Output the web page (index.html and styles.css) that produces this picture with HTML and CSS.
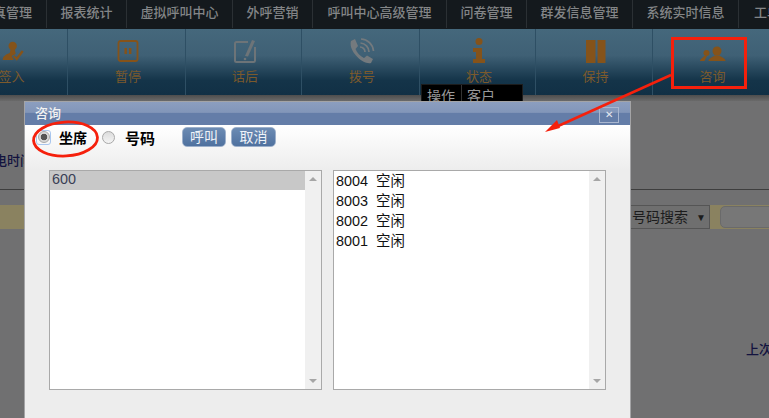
FILE: index.html
```html
<!DOCTYPE html>
<html lang="zh">
<head>
<meta charset="utf-8">
<title>咨询</title>
<link rel="stylesheet" href="styles.css">
</head>
<body>
<div class="page">
  <nav class="nav">
    <span class="nav-item w-first"><span class="clip-right">真管理</span></span>
    <span class="nav-item w80">报表统计</span>
    <span class="nav-item w106">虚拟呼叫中心</span>
    <span class="nav-item w80">外呼营销</span>
    <span class="nav-item w134">呼叫中心高级管理</span>
    <span class="nav-item w80">问卷管理</span>
    <span class="nav-item w106">群发信息管理</span>
    <span class="nav-item w106">系统实时信息</span>
    <span class="nav-item w-last">工单</span>
  </nav>
  <div class="toolbar">
    <div class="tool tool-a tool-first">
      <svg class="icon" viewBox="1.300 0 26 26" width="26" height="26"><circle cx="15" cy="8" r="4.200" fill="#85531a"/><path d="M13 11h4l1 5-4 2 2 4H5c0-4 4-6 7-7z" fill="#85531a"/><path d="M16 18l3 3 6-8" fill="none" stroke="#85531a" stroke-width="2.400"/></svg>
      <span class="tool-label">签入</span>
    </div>
    <div class="tool tool-a">
      <svg class="icon" viewBox="0 0 26 26" width="26" height="26"><rect x="3.500" y="3" width="19" height="20" rx="2" fill="none" stroke="#85531a" stroke-width="1.800"/><rect x="9.500" y="10" width="2.400" height="6" fill="#85531a"/><rect x="14" y="10" width="2.400" height="6" fill="#85531a"/></svg>
      <span class="tool-label">暂停</span>
    </div>
    <div class="tool tool-b">
      <svg class="icon" viewBox="0 0 26 26" width="26" height="26"><path d="M16 4H4.500a1.500 1.500 0 0 0-1.500 1.500v17a1.500 1.500 0 0 0 1.500 1.500h17a1.500 1.500 0 0 0 1.500-1.500V9" fill="none" stroke="#6d7478" stroke-width="2"/><path d="M13 18l7-16 3 1-7 15.500z" fill="#6d7478"/><circle cx="13" cy="21" r="1.300" fill="#6d7478"/></svg>
      <span class="tool-label">话后</span>
    </div>
    <div class="tool tool-a">
      <svg class="icon" viewBox="0 0 26 26" width="26" height="26"><path d="M2 3l4-2 3 7-2.500 3C8 15 11 18 15 20l3-2.500 6 3.500-2 4C14 27-1 13 2 3z" fill="#747a7e"/><path d="M11 9a5 5 0 0 1 5 5M11.500 5A9 9 0 0 1 20 14M12 1a13 13 0 0 1 12.500 12" fill="none" stroke="#747a7e" stroke-width="1.700"/></svg>
      <span class="tool-label">拨号</span>
    </div>
    <div class="tool tool-b">
      <svg class="icon" viewBox="0 0 26 26" width="26" height="26"><circle cx="13" cy="3.500" r="3.500" fill="#85531a"/><path d="M7 10h9v11h3v4H7v-4h3v-7H7z" fill="#85531a"/></svg>
      <span class="tool-label">状态</span>
    </div>
    <div class="tool tool-c">
      <svg class="icon" viewBox="0 0 26 26" width="26" height="26"><rect x="3" y="2" width="9.500" height="23" fill="#85531a"/><rect x="14.500" y="2" width="8" height="23" fill="#85531a"/></svg>
      <span class="tool-label">保持</span>
    </div>
    <div class="tool tool-b tool-end">
      <svg class="icon" viewBox="0 0 26 26" width="26" height="26"><circle cx="17" cy="13" r="4.500" fill="#85531a"/><path d="M8.500 23c0-3 4-3.500 6-5.500h5c2 2 6 2.500 6 5.500z" fill="#85531a"/><circle cx="6.500" cy="15" r="3" fill="#85531a"/><path d="M0 23c0-2 3-3 4-5h3l-2.500 5z" fill="#85531a"/></svg>
      <span class="tool-label">咨询</span>
    </div>
  </div>
  <div class="strip"></div>
  <div class="row-time"><span class="time-label">电时间</span></div>
  <div class="row-search">
    <span class="search-select">号码搜索<span class="caret">▼</span></span>
    <span class="search-input"></span>
  </div>
  <div class="row-last">上次</div>

  <div class="popup"><span class="popup-cell popup-a">操作</span><span class="popup-cell">客户</span></div>

  <section class="dialog">
    <header class="dialog-title">
      <span class="title-text">咨询</span>
      <span class="close">✕</span>
    </header>
    <div class="dialog-body">
      <div class="controls">
        <span class="radio-focus"><input class="radio radio-on" type="radio" name="mode" checked></span>
        <span class="radio-label label-a">坐席</span>
        <input class="radio" type="radio" name="mode">
        <span class="radio-label label-b">号码</span>
        <span class="btn btn-call">呼叫</span>
        <span class="btn">取消</span>
      </div>
      <div class="lists">
        <div class="listbox listbox-left">
          <div class="items"><div class="item item-selected">600</div></div>
          <div class="scroll"><span class="arrow-up"></span><span class="arrow-down"></span></div>
        </div>
        <div class="listbox listbox-right">
          <div class="items">
            <div class="item">8004&nbsp;&nbsp;空闲</div>
            <div class="item">8003&nbsp;&nbsp;空闲</div>
            <div class="item">8002&nbsp;&nbsp;空闲</div>
            <div class="item">8001&nbsp;&nbsp;空闲</div>
          </div>
          <div class="scroll"><span class="arrow-up"></span><span class="arrow-down"></span></div>
        </div>
      </div>
    </div>
  </section>

  <svg class="annot" viewBox="0 0 769 418" width="769" height="418">
    <rect x="672.500" y="38.500" width="73" height="49" fill="none" stroke="#f5200c" stroke-width="3"/>
    <line x1="671" y1="75" x2="556" y2="127" stroke="#f5200c" stroke-width="2.500"/>
    <path d="M545 132l12-12 3 8z" fill="#f5200c"/>
    <ellipse cx="65.500" cy="139" rx="32" ry="17" transform="rotate(-3 65.500 139)" fill="none" stroke="#f5200c" stroke-width="2.800"/>
  </svg>
</div>
</body>
</html>
```
FILE: styles.css
```css
* { box-sizing: border-box; }
html, body { margin: 0; padding: 0; }
body {
  font-family: "Liberation Sans", "Noto Sans CJK SC", sans-serif;
  background: #707071;
}
.page {
  position: relative;
  width: 769px;
  height: 418px;
  overflow: hidden;
  background: #707071;
}

/* top nav */
.nav {
  display: flex;
  height: 29px;
  background: #14191d;
  overflow: hidden;
}
.nav-item {
  flex: none;
  height: 28px;
  line-height: 26px;
  text-align: center;
  font-size: 13px;
  font-weight: 500;
  color: #838587;
  border-right: 1px solid #2b3034;
  white-space: nowrap;
}
.w-first { width: 47px; overflow: hidden; text-align: right; padding-right: 14px; }
.clip-right { display: inline-block; margin-left: -20px; }
.w80 { width: 80px; }
.w106 { width: 106px; }
.w134 { width: 134px; }
.w-last { flex: 1; border-right: 0; text-align: left; padding-left: 15px; }

/* toolbar */
.toolbar {
  display: flex;
  height: 66px;
  margin-left: -50px;
  background: linear-gradient(#45687c 0%, #3f6075 40%, #143449 78%, #113045 100%);
}
.tool {
  flex: none;
  display: flex;
  flex-direction: column;
  align-items: center;
  padding: 9px 0 0 3px;
  border-right: 1px solid #2e4f64;
}
.tool-a { width: 118px; }
.tool-b { width: 116px; }
.tool-c { width: 117px; }
.tool-first { padding-left: 6px; }
.tool-end { border-right: 0; }
.icon { display: block; flex: none; }
.tool-label {
  margin-top: 4px;
  font-size: 13px;
  line-height: 18px;
  color: #7c5a2c;
}

.strip { height: 6px; background: linear-gradient(#4d4d4d, #6a6a6a); }

/* dimmed page */
.row-time {
  height: 89px;
  border-bottom: 1px solid #3e3e3e;
  padding-top: 51px;
  font-size: 13px;
  line-height: 18px;
  color: #13133f;
}
.time-label { display: block; margin-left: -6px; font-weight: 500; }
.row-search {
  display: flex;
  margin-top: 15px;
  height: 24px;
  padding-left: 630px;
  background: #8a8260;
  align-items: center;
}
.search-select {
  flex: none;
  width: 80px;
  height: 24px;
  background: #6f6f6f;
  border: 1px solid #555;
  border-left: 0;
  font-size: 14px;
  line-height: 22px;
  color: #1c1c1c;
  padding-left: 2px;
}
.caret { font-size: 10px; margin-left: 8px; vertical-align: 1px; }
.search-input {
  flex: none;
  width: 60px;
  height: 22px;
  margin-left: 10px;
  background: #777;
  border: 1px solid #6a6a6a;
  border-radius: 5px;
}
.row-last {
  margin-top: 112px;
  padding-left: 746px;
  font-size: 13px;
  line-height: 18px;
  font-weight: 500;
  color: #13133f;
  white-space: nowrap;
}

/* black popup under dialog */
.popup {
  position: absolute;
  left: 421px;
  top: 84px;
  width: 102px;
  height: 24px;
  display: flex;
  background: #000;
  border: 1px solid #1c1c1c;
  color: #9a9a9a;
  font-size: 14px;
  line-height: 23px;
}
.popup-cell { padding-left: 5px; }
.popup-a { width: 40px; border-right: 1px solid #333; }

/* dialog */
.dialog {
  position: absolute;
  left: 24px;
  top: 101px;
  width: 607px;
  height: 330px;
  border: 1px solid #a4a4a6;
  border-bottom: 0;
  background: #ededed;
}
.dialog-title {
  position: relative;
  height: 23px;
  background: linear-gradient(#8c9ebf 0%, #8296b9 45%, #647da8 50%, #647da8 100%);
  color: #f2f2f2;
  font-size: 13px;
  font-weight: 500;
  line-height: 23px;
  padding-left: 10px;
}
.title-text { display: block; }
.close {
  position: absolute;
  right: 11px;
  top: 5px;
  width: 20px;
  height: 16px;
  border: 1px solid #a9b6cf;
  font-size: 10px;
  line-height: 14px;
  text-align: center;
  color: #e6e9f0;
}
.dialog-body {
  height: 307px;
  background: linear-gradient(#ffffff 0, #ededed 45px);
}
.controls {
  display: flex;
  align-items: center;
  height: 24px;
  padding: 0 0 0 11px;
}
.radio-focus {
  flex: none;
  display: flex;
  align-items: center;
  justify-content: center;
  width: 15px;
  height: 15px;
  border: 1.5px solid #a9c6ee;
  border-radius: 3px;
}
.radio {
  appearance: none;
  flex: none;
  width: 13px;
  height: 13px;
  margin: 0;
  border: 1px solid #a8a8a8;
  border-radius: 50%;
  background: linear-gradient(#dcdcdc, #f4f4f4);
}
.radio-on {
  width: 12px;
  height: 12px;
  background: radial-gradient(circle, #555 0 3px, #d8d8d8 3.6px);
}
.radio-label {
  flex: none;
  font-size: 14px;
  font-weight: 700;
  color: #000;
}
.label-a { margin-left: 8px; margin-right: 14px; width: 29px; }
.label-b { margin-left: 10px; width: 30px; font-size: 15px; }
.btn {
  flex: none;
  width: 45px;
  height: 20px;
  margin-left: 5px;
  border: 1px solid #9db0cb;
  border-radius: 5px;
  background: linear-gradient(#6c8bb3, #4f719f);
  color: #eef2f8;
  font-size: 14px;
  line-height: 18px;
  text-align: center;
}
.btn-call { width: 44px; margin-left: 27px; }
.lists {
  display: flex;
  gap: 11px;
  margin-top: 21px;
  padding-left: 24px;
}
.listbox {
  flex: none;
  display: flex;
  height: 220px;
  border: 1px solid #a9a9a9;
  background: #fff;
}
.listbox-left { width: 273px; }
.listbox-right { width: 273px; }
.items { flex: 1; min-width: 0; }
.item {
  height: 20px;
  padding-left: 2px;
  font-size: 14.4px;
  line-height: 20px;
  color: #111;
}
.listbox-left .item { line-height: 17px; color: #3a3f55; }
.item-selected { background: #c8c8c8; height: 19px; }
.scroll {
  flex: none;
  position: relative;
  width: 16px;
  background: #f0f0f0;
}
.arrow-up, .arrow-down {
  position: absolute;
  left: 4px;
  width: 0;
  height: 0;
  border-left: 4px solid transparent;
  border-right: 4px solid transparent;
}
.arrow-up { top: 6px; border-bottom: 4px solid #a6a6a6; }
.arrow-down { bottom: 6px; border-top: 4px solid #a6a6a6; }

.annot {
  position: absolute;
  left: 0;
  top: 0;
  pointer-events: none;
}
```
